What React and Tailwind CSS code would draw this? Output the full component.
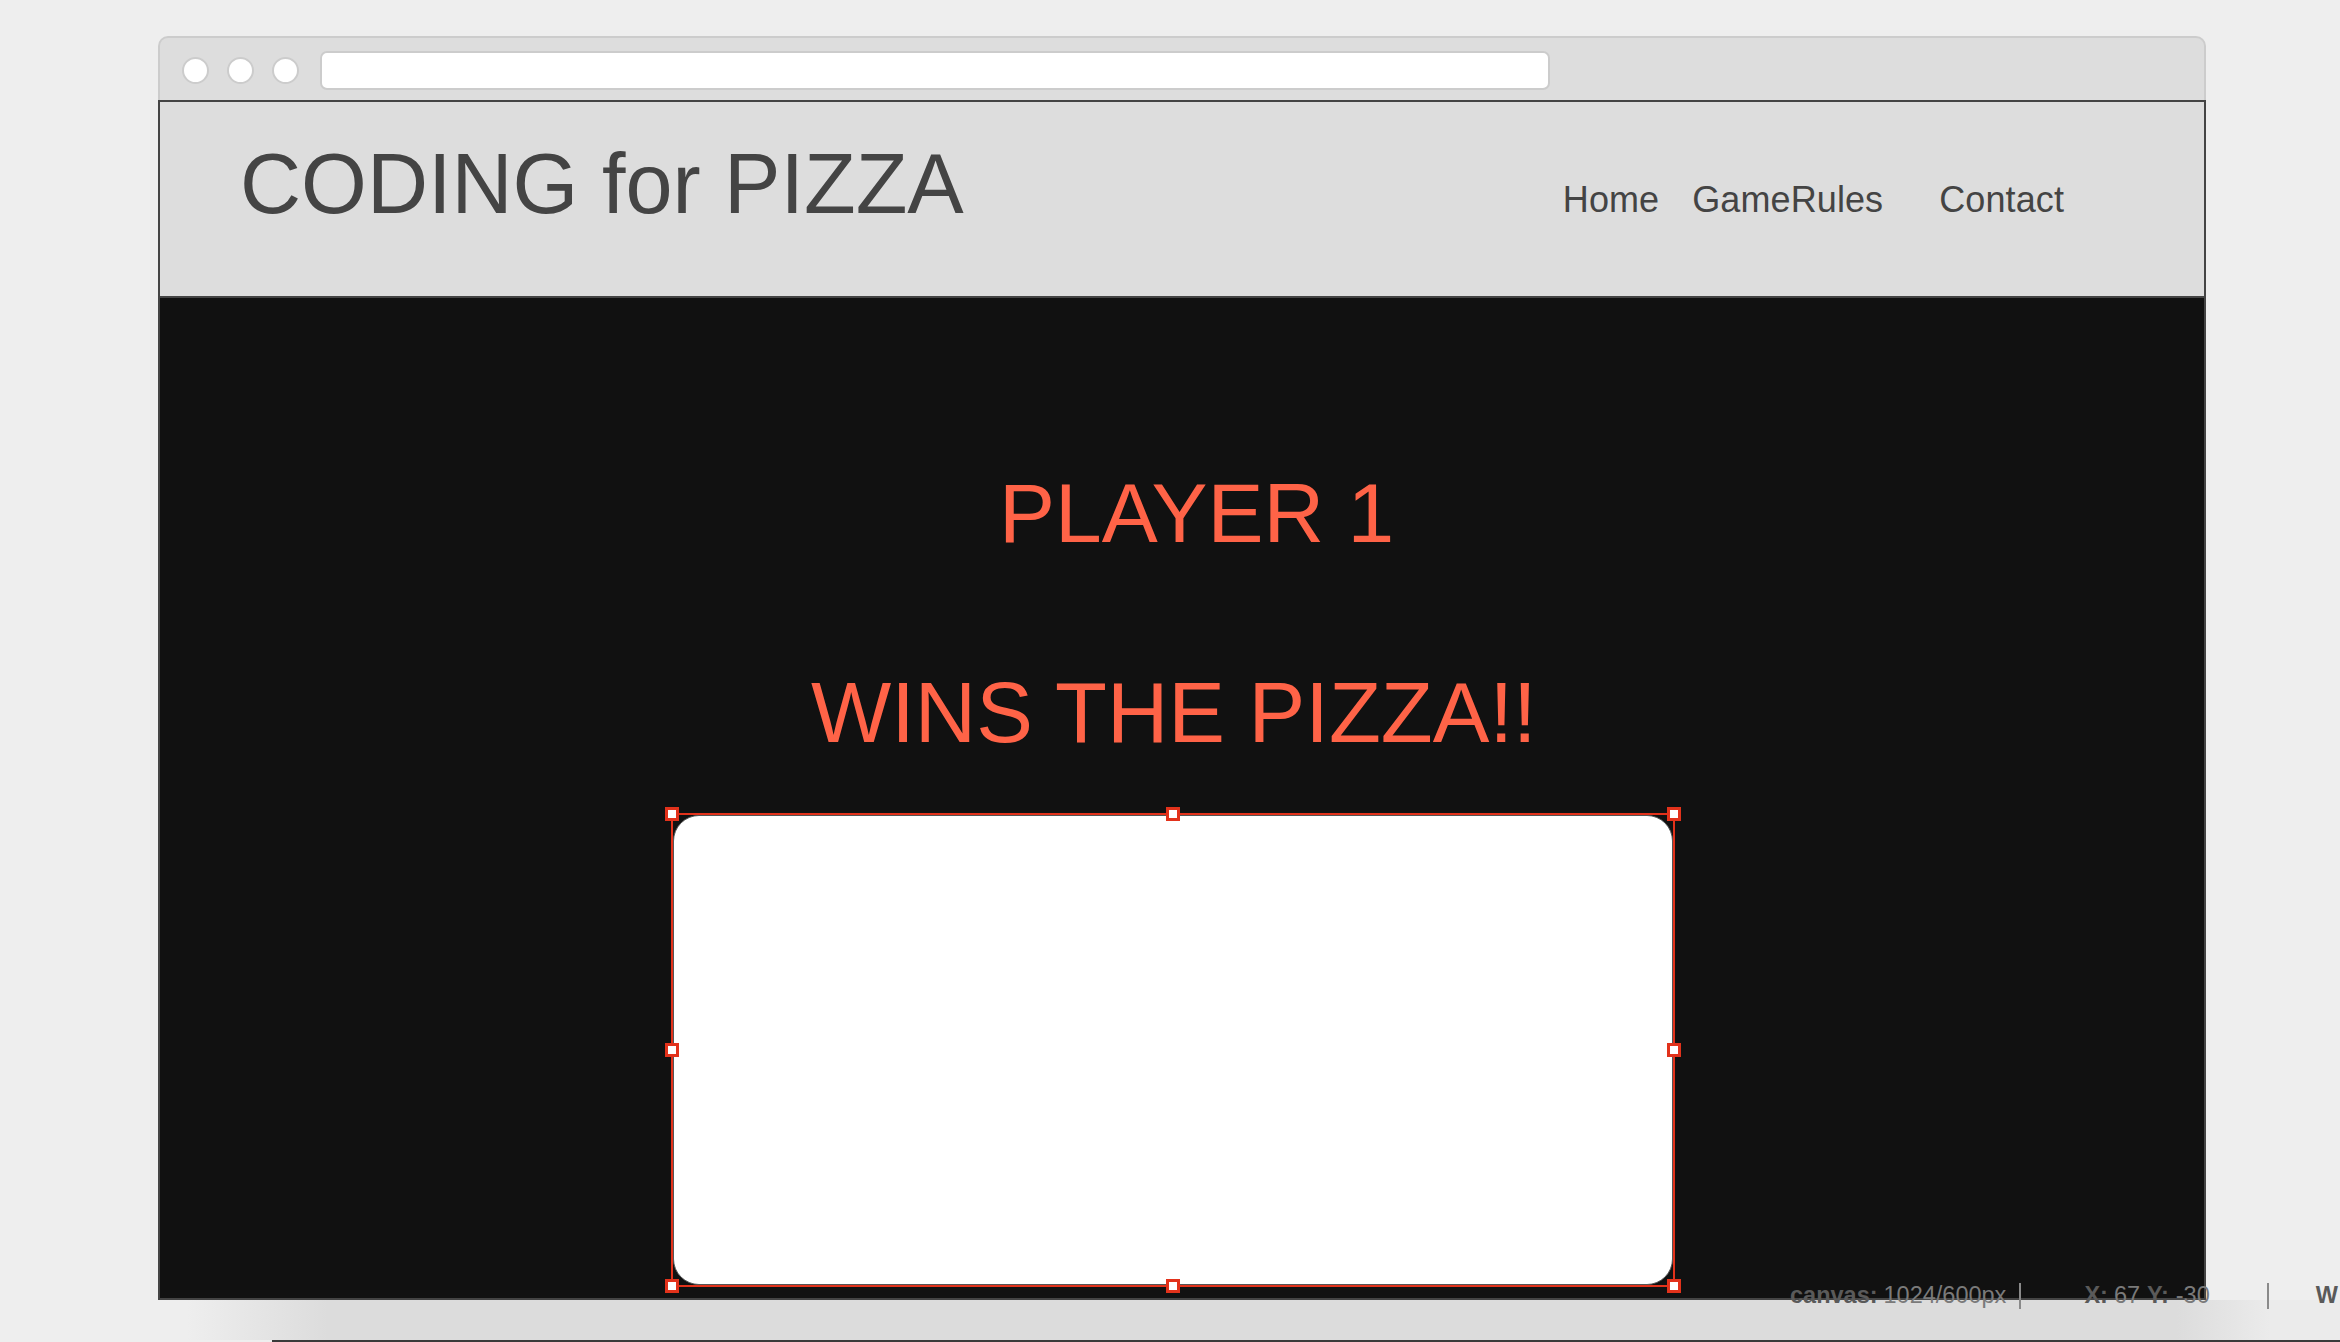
import React from "react";

const Handle = ({ className }) => (
  <div className={`absolute w-[14px] h-[14px] bg-white border-[3px] border-[#e2321b] ${className}`} />
);

export default function App() {
  return (
    <div className="relative w-[2340px] h-[1342px] overflow-hidden bg-[#eeeeee] font-['Liberation_Sans',Arial,sans-serif]">
      <div className="pt-[36px]">
        {/* browser window */}
        <div className="ml-[158px] w-[2048px]">
          {/* chrome */}
          <div className="h-[64px] bg-[#dddddd] border-2 border-b-0 border-[#cccccc] rounded-t-[10px] flex items-center pl-[22px] pt-[2px]">
            <div className="flex items-center gap-[18px]">
              <div className="w-[27px] h-[27px] rounded-full bg-white border-2 border-[#cccccc]" />
              <div className="w-[27px] h-[27px] rounded-full bg-white border-2 border-[#cccccc]" />
              <div className="w-[27px] h-[27px] rounded-full bg-white border-2 border-[#cccccc]" />
            </div>
            <div className="ml-[21px] w-[1230px] h-[39px] rounded-[7px] bg-white border-2 border-[#cccccc]" />
          </div>
          {/* canvas */}
          <div className="h-[1200px] border-2 border-[#444444] flex flex-col">
            <div className="h-[196px] shrink-0 bg-[#dddddd] border-b-2 border-[#444444] flex items-start justify-between pl-[80px] pr-[140px]">
              <div className="mt-[40px] text-[84.6px] leading-none text-[#444444] whitespace-nowrap">CODING for PIZZA</div>
              <nav className="mt-[80px] flex text-[36px] leading-none text-[#444444] whitespace-nowrap tracking-[0.1px]">
                <span>Home</span>
                <span className="ml-[33px]">GameRules</span>
                <span className="ml-[56px]">Contact</span>
              </nav>
            </div>
            <div className="flex-1 bg-[#111111] flex flex-col">
              <div className="mt-[173px] pl-[839px] text-[84px] leading-none text-[#ff6347] whitespace-nowrap">PLAYER 1</div>
              <div className="mt-[115px] pl-[651px] text-[85px] leading-none text-[#ff6347] whitespace-nowrap">WINS THE PIZZA!!</div>
              <div className="mt-[58px] ml-[511px] relative w-[1004px] h-[474px]">
                <div className="absolute inset-[2px] rounded-[26px] bg-white border border-[#555555]" />
                <div className="absolute inset-0 border-2 border-[#e2321b]" />
                <Handle className="-left-[6px] -top-[6px]" />
                <Handle className="left-[495px] -top-[6px]" />
                <Handle className="-right-[6px] -top-[6px]" />
                <Handle className="-left-[6px] top-[230px]" />
                <Handle className="-right-[6px] top-[230px]" />
                <Handle className="-left-[6px] -bottom-[6px]" />
                <Handle className="left-[495px] -bottom-[6px]" />
                <Handle className="-right-[6px] -bottom-[6px]" />
              </div>
            </div>
          </div>
        </div>
        {/* bottom status bar */}
        <div className="h-[40px] bg-[linear-gradient(to_right,#eeeeee_8%,#dcdcdc_14%,#dcdcdc_93%,#ebebeb_97%)]" />
        <div className="flex h-[2px]">
          <div className="w-[272px] bg-[#eeeeee]" />
          <div className="flex-1 bg-[#3a3a3a]" />
        </div>
      </div>
      {/* status text overlay */}
      <div className="absolute left-[1790px] top-[1283px] flex items-center text-[23.5px] leading-none text-[#7a7a7a] whitespace-nowrap">
        <span className="font-bold text-[#5a5a5a]">canvas:</span>
        <span className="ml-[6px]">1024/600px</span>
        <span className="ml-[13px] w-[2px] h-[26px] bg-[#8a8a8a]" />
        <span className="ml-[63px] font-bold text-[#5a5a5a]">X:</span>
        <span className="ml-[6px]">67</span>
        <span className="ml-[7px] font-bold text-[#5a5a5a]">Y:</span>
        <span className="ml-[7px]">-30</span>
        <span className="ml-[57px] w-[2px] h-[26px] bg-[#8a8a8a]" />
        <span className="ml-[47px] font-bold text-[#5a5a5a]">W</span>
      </div>
    </div>
  );
}
